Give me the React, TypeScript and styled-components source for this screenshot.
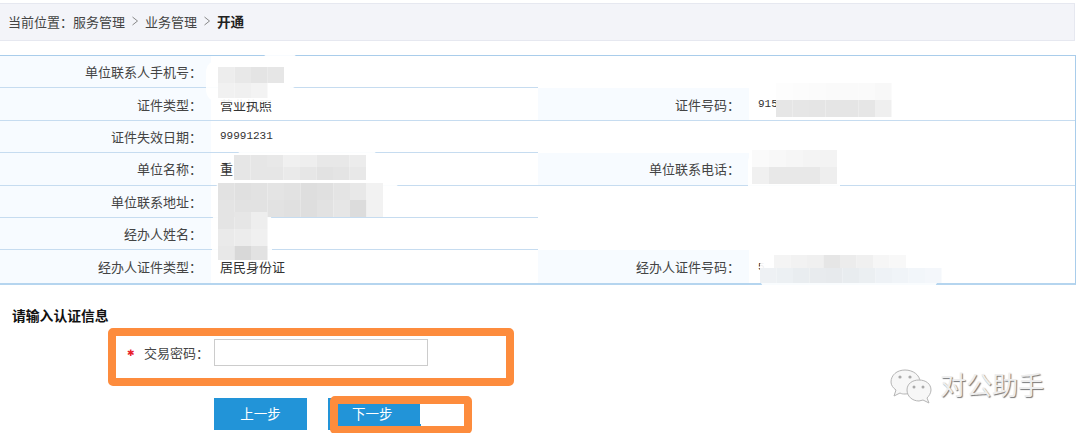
import React from "react";
import styled, { createGlobalStyle } from "styled-components";

const Global = createGlobalStyle`
  html, body { margin: 0; padding: 0; background: #fff; }
  body { font-family: "Liberation Sans", "Noto Sans CJK SC", sans-serif; }
`;

const Page = styled.div`
  position: relative;
  width: 1080px;
  height: 433px;
  overflow: hidden;
  background: #fff;
  padding-top: 3px;
  box-sizing: border-box;
`;

const Breadcrumb = styled.nav`
  width: 1075px;
  height: 38px;
  box-sizing: border-box;
  display: flex;
  align-items: center;
  padding: 0 0 2px 8px;
  background: #f3f4f9;
  border: 1px solid #e6e8f0;
  border-left: none;
  font-size: 13px;
  color: #444;
`;

const Current = styled.strong`
  color: #222;
  font-size: 13.6px;
  font-weight: 700;
`;

const Chevron = styled.svg`
  width: 8px;
  height: 10px;
  margin: 0 6px;
  fill: none;
  stroke: #888;
  stroke-width: 1;
`;

const InfoTable = styled.section`
  width: 1076px;
  margin-top: 14px;
  box-sizing: border-box;
  border-top: 1px solid #a9cdeb;
  border-right: 1px solid #a9cdeb;
  border-bottom: 2px solid #b5d5ef;
`;

const Row = styled.div`
  display: grid;
  grid-template-columns: 211px 327px 211px 1fr;
  height: 32.4px;
  box-sizing: border-box;
`;

const Label = styled.div<{ $line: boolean }>`
  display: flex;
  align-items: center;
  justify-content: flex-end;
  padding-right: 9px;
  box-sizing: border-box;
  background: #f7fbff;
  color: #444;
  font-size: 13px;
  border-bottom: ${(p) => (p.$line ? "1px solid #c6dcf0" : "none")};
`;

const Value = styled.div<{ $line: boolean }>`
  display: flex;
  align-items: center;
  padding-left: 9px;
  box-sizing: border-box;
  background: #fff;
  color: #333;
  font-size: 13px;
  border-bottom: ${(p) => (p.$line ? "1px solid #c6dcf0" : "none")};
`;

const Mono = styled.span`
  font-family: "Liberation Mono", monospace;
  font-size: 11px;
`;

const Heading = styled.h3`
  margin: 23px 0 0 12px;
  height: 18px;
  line-height: 18px;
  font-size: 13.8px;
  font-weight: 700;
  color: #111;
`;

const FormBox = styled.div`
  width: 406px;
  height: 58px;
  margin: 2px 0 0 108px;
  box-sizing: border-box;
  border: 8px solid #fd8c3d;
  border-radius: 5px;
  display: flex;
  align-items: center;
  padding: 0 0 8px 11px;
`;

const Star = styled.span`
  color: #e8202a;
  font-family: "DejaVu Sans", sans-serif;
  font-size: 9px;
  width: 17px;
`;

const FieldLabel = styled.label`
  color: #444;
  font-size: 13px;
  width: 70px;
  white-space: nowrap;
`;

const Input = styled.input`
  width: 214px;
  height: 27px;
  box-sizing: border-box;
  border: 1px solid #ccc;
  background: #fff;
  padding: 0;
`;

const Actions = styled.div`
  display: flex;
  gap: 21px;
  margin: 12px 0 0 214px;
`;

const Btn = styled.button`
  position: relative;
  width: 93px;
  height: 32px;
  border: none;
  padding: 0 0 2px;
  background: #2294d8;
  color: #fff;
  font-size: 13.5px;
  font-family: inherit;
`;

const NextBtn = styled(Btn)`
  text-align: left;
  padding-left: 24px;
`;

const Annotation = styled.span`
  position: absolute;
  left: 2px;
  top: -2px;
  width: 142px;
  height: 38px;
  box-sizing: border-box;
  border: 8px solid #fd8c3d;
  border-radius: 5px;
`;

const WhitePatch = styled.span`
  position: absolute;
  left: 92px;
  top: 6px;
  width: 43px;
  height: 20px;
  background: #fff;
`;

const Overlay = styled.svg`
  position: absolute;
  left: 0;
  top: 0;
  pointer-events: none;
`;

const Watermark = styled.div`
  position: absolute;
  left: 890px;
  top: 367px;
  display: flex;
  align-items: center;
  gap: 6px;
  font-size: 26px;
  line-height: 38px;
  color: #eeeeee;
  text-shadow: 1px 1px 1px #777;
`;

type Cell = [number, number, number, number, string];

const grid = (x: number, y: number, w: number, h: number, cols: string[]): Cell[] =>
  cols.map((c, i) => [x + i * w, y, w, h, c]);

const cells: Cell[] = [
  ...grid(218, 67, 16.5, 16, ["#ededed", "#e8e8e8", "#e4e4e4", "#e6e6e6"]),
  ...grid(218, 83, 16.5, 15, ["#f1f1f1", "#f0f0f0", "#f3f3f3"]),
  ...grid(776, 83, 16.5, 17, ["#fdfdfd", "#fcfcfc", "#fbfbfb", "#fafafa", "#fafafa", "#fafafa", "#f8f8f8"]),
  ...grid(776, 100, 16.5, 17, ["#e6e6e6", "#e6e6e6", "#e5e5e5", "#e5e5e5", "#e5e5e5", "#e6e6e6", "#efefef"]),
  ...grid(234, 155, 16.5, 12, ["#e6e6e6", "#e6e6e6", "#e8e8e8", "#f0f0f0", "#eeeeee", "#e8e8e8", "#e8e8e8", "#ececec"]),
  ...grid(234, 167, 16.5, 13, ["#e6e6e6", "#e6e6e6", "#e6e6e6", "#eaeaea", "#e6e6e6", "#e2e2e2", "#e4e4e4", "#e8e8e8"]),
  ...grid(218, 183, 16.5, 17, ["#e2e2e2", "#e0e0e0", "#e2e2e2", "#e4e4e4", "#e2e2e2", "#dedede", "#e0e0e0", "#e4e4e4", "#e8e8e8", "#f2f2f2"]),
  ...grid(218, 200, 16.5, 17, ["#e4e4e4", "#e2e2e2", "#e2e2e2", "#e2e2e2", "#e0e0e0", "#dedede", "#e2e2e2", "#e6e6e6", "#dcdcdc", "#f2f2f2"]),
  ...grid(218, 212, 16.5, 17, ["#e4e4e4", "#e6e6e6", "#eeeeee"]),
  ...grid(218, 229, 16.5, 17, ["#eaeaea", "#ececec", "#f0f0f0"]),
  ...grid(218, 246, 16.5, 14, ["#e8e8e8", "#d8d8d8", "#e2e2e2"]),
  ...grid(752, 150, 17, 17, ["#fafafa", "#f8f8f8", "#f6f6f6", "#f4f4f4", "#f3f3f3"]),
  ...grid(752, 167, 17, 17, ["#f0f0f0", "#e8e8e8", "#e8e8e8", "#e8e8e8", "#eeeeee"]),
  ...grid(774, 255, 16.5, 13, ["#f4f4f4", "#f2f2f2", "#f0f0f0", "#e6e6e6", "#ececec", "#f0f0f0", "#f6f6f6", "#f8f8f8"]),
  ...grid(760, 268, 16.5, 15, ["#eef1f4", "#ecf0f3", "#e9edf0", "#e8ebee", "#e7eaed", "#e8ecef", "#ebeff2", "#eef2f6", "#f0f4f8", "#f2f6fa", "#f4f7fb"]),
];

const whites: Cell[] = [
  [206, 60, 84, 42, "#fff"],
  [260, 53, 40, 36, "#fff"],
  [776, 80, 112, 40, "#fff"],
  [234, 150, 146, 36, "#fff"],
  [212, 183, 190, 34, "#fff"],
  [212, 210, 60, 52, "#fff"],
  [748, 150, 92, 48, "#fff"],
  [760, 254, 178, 36, "#fff"],
];

function WeChatMark() {
  return (
    <svg width="44" height="38" viewBox="0 0 44 38" fill="#f7f7f7" stroke="#b5b5b5" strokeWidth="1">
      <path d="M15 3c8 0 15 5 15 12 0 7-7 12-15 12-2 0-3 0-5-1l-6 3 2-6C3 21 1 18 1 15 1 8 7 3 15 3z" />
      <path d="M29 13c7 0 12 4 12 10 0 3-2 6-4 8l2 5-6-3c-1 0-3 1-4 1-7 0-12-5-12-11s5-10 12-10z" />
      <circle cx="10" cy="10" r="1.6" fill="#aaa" stroke="none" />
      <circle cx="20" cy="10" r="1.6" fill="#aaa" stroke="none" />
      <circle cx="24" cy="20" r="1.5" fill="#aaa" stroke="none" />
      <circle cx="33" cy="20" r="1.5" fill="#aaa" stroke="none" />
    </svg>
  );
}

const rows = [
  { l: "单位联系人手机号：", v: "", full: false },
  { l: "证件类型：", v: "营业执照", l2: "证件号码：", v2: "915", full: true },
  { l: "证件失效日期：", v: "99991231", mono: true, full: false },
  { l: "单位名称：", v: "重", l2: "单位联系电话：", v2: "", full: true },
  { l: "单位联系地址：", v: "", full: false },
  { l: "经办人姓名：", v: "", full: false },
  { l: "经办人证件类型：", v: "居民身份证", l2: "经办人证件号码：", v2: "5", last: true, full: false },
];

const Sep = () => (
  <Chevron viewBox="0 0 8 10">
    <path d="M1.5 1l5 4-5 4" />
  </Chevron>
);

export default function App() {
  return (
    <Page>
      <Global />
      <Breadcrumb>
        当前位置：服务管理
        <Sep />
        业务管理
        <Sep />
        <Current>开通</Current>
      </Breadcrumb>

      <InfoTable>
        {rows.map((r) => {
          const left = !r.last;
          const right = r.full;
          return (
            <Row key={r.l}>
              <Label $line={left}>{r.l}</Label>
              <Value $line={left}>{r.mono ? <Mono>{r.v}</Mono> : r.v}</Value>
              {r.l2 ? <Label $line={right}>{r.l2}</Label> : <Value $line={false} />}
              {r.l2 ? (
                <Value $line={right}>
                  <Mono>{r.v2}</Mono>
                </Value>
              ) : (
                <Value $line={false} />
              )}
            </Row>
          );
        })}
      </InfoTable>

      <Heading>请输入认证信息</Heading>
      <FormBox>
        <Star>✱</Star>
        <FieldLabel>交易密码：</FieldLabel>
        <Input type="text" />
      </FormBox>
      <Actions>
        <Btn>上一步</Btn>
        <NextBtn>
          下一步
          <WhitePatch />
          <Annotation />
        </NextBtn>
      </Actions>

      <Overlay width="1080" height="433" viewBox="0 0 1080 433">
        {whites.map(([x, y, w, h, c], i) => (
          <rect key={"w" + i} x={x} y={y} width={w} height={h} rx={12} fill={c} opacity={0.92} />
        ))}
        {cells.map(([x, y, w, h, c], i) => (
          <rect key={"c" + i} x={x} y={y} width={w} height={h} fill={c} />
        ))}
      </Overlay>

      <Watermark>
        <WeChatMark />
        <span>对公助手</span>
      </Watermark>
    </Page>
  );
}
